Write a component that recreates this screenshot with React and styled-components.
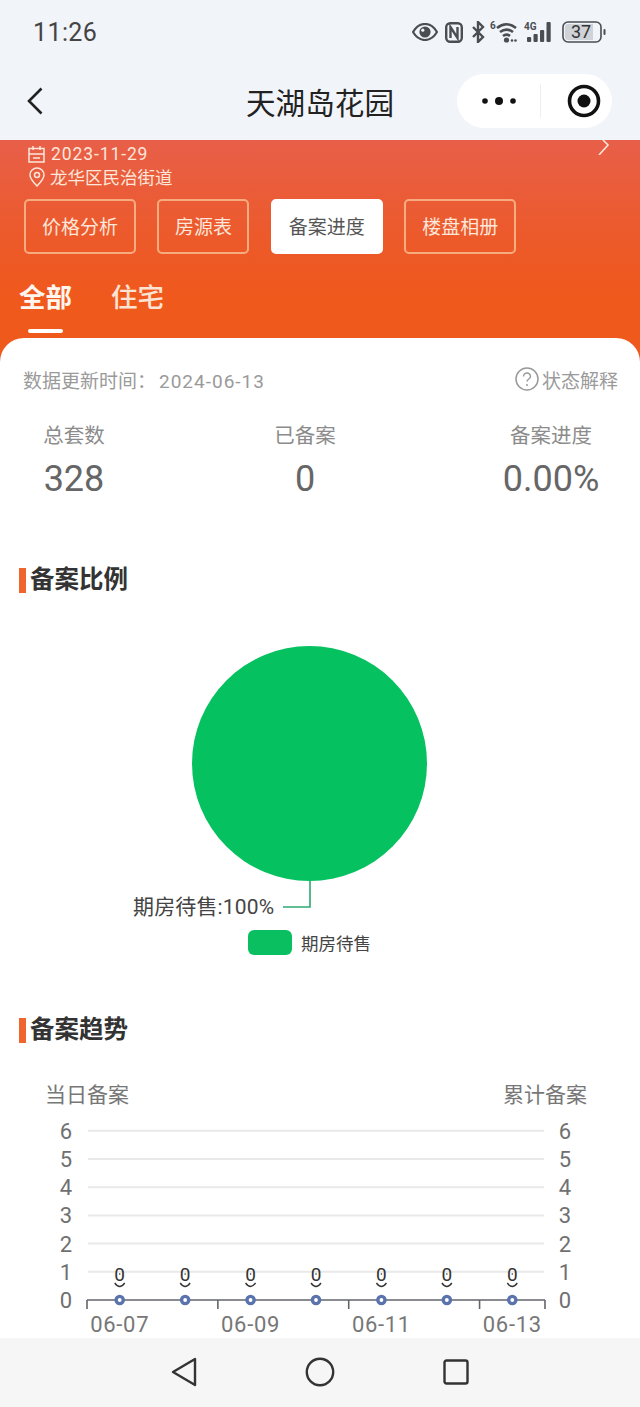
import React from 'react';
import styled, { createGlobalStyle } from 'styled-components';

const FONT = `Roboto, "Noto Sans CJK SC", sans-serif`;

const GlobalStyle = createGlobalStyle`
  html, body { margin: 0; padding: 0; background: #fff; }
  body { font-family: ${FONT}; }
  * { box-sizing: border-box; }
`;

const Screen = styled.div`
  width: 640px;
  height: 1407px;
  display: flex;
  flex-direction: column;
  overflow: hidden;
  background: #fff;
`;

const StatusBar = styled.div`
  height: 64px;
  flex: none;
  display: flex;
  align-items: center;
  justify-content: space-between;
  padding: 0 34px 0 33px;
  background: #f1f4f9;
`;

const Time = styled.span`
  font-size: 25px;
  color: #444;
  letter-spacing: 0.4px;
`;

const StatusIcons = styled.div`
  display: flex;
  align-items: center;
  color: #4a4d52;
`;

const StatusIcon = styled.svg`
  margin-left: ${(p) => p.$left || 0}px;
`;

const NavBar = styled.div`
  height: 76px;
  flex: none;
  display: flex;
  align-items: center;
  justify-content: space-between;
  padding: 0 28px 2px 27px;
  background: #f1f4f9;
  position: relative;
`;

const NavTitle = styled.h1`
  position: absolute;
  left: 0;
  right: 0;
  margin: 0;
  text-align: center;
  font-size: 29.6px;
  font-weight: 400;
  color: #222;
  pointer-events: none;
`;

const Capsule = styled.div`
  width: 155px;
  height: 54px;
  display: flex;
  align-items: center;
  border-radius: 27px;
  background: #fff;
`;

const CapsuleCell = styled.div`
  flex: ${(p) => (p.$wide ? '0 0 84px' : '1')};
  height: 34px;
  display: flex;
  align-items: center;
  justify-content: center;
  padding-left: ${(p) => (p.$wide ? 0 : 14)}px;
  border-right: ${(p) => (p.$wide ? '1px solid #eeeff1' : 'none')};
`;

const Hero = styled.div`
  height: 222px;
  flex: none;
  position: relative;
  padding: 2px 24px 0;
  color: #fde6da;
  background: linear-gradient(180deg, #e85f49 0%, #ec5a2c 42%, #f0591c 72%);
`;

const HeroArrow = styled.svg`
  position: absolute;
  top: 0;
  right: 30px;
`;

const MetaLine = styled.div`
  height: 23px;
  display: flex;
  align-items: center;
  gap: ${(p) => p.$gap || 5}px;
  padding-left: 4px;
  font-size: ${(p) => p.$size || 17.5}px;
  letter-spacing: ${(p) => p.$spacing || 0}px;
`;

const ButtonRow = styled.div`
  display: flex;
  gap: 21.4px;
  margin-top: 11px;
`;

const HeroButton = styled.div`
  width: ${(p) => p.$width}px;
  height: 55px;
  display: flex;
  align-items: center;
  justify-content: center;
  padding-bottom: 2px;
  border-radius: 5px;
  font-size: 19px;
  border: 2px solid ${(p) => (p.$active ? '#fff' : '#f6ac7e')};
  background: ${(p) => (p.$active ? '#fff' : 'transparent')};
  color: ${(p) => (p.$active ? '#555' : '#fde6da')};
`;

const TabRow = styled.div`
  display: flex;
  gap: 38px;
  margin: 26px 0 0 -5px;
`;

const Tab = styled.div`
  width: 54px;
  height: 36px;
  line-height: 36px;
  font-size: 26.5px;
  white-space: nowrap;
  font-weight: ${(p) => (p.$active ? 700 : 500)};
  color: ${(p) => (p.$active ? '#fff6f0' : '#fde3d3')};
`;

const TabMark = styled.div`
  width: 35px;
  height: 4px;
  margin: 13px 0 0 9px;
  border-radius: 2px;
  background: #fff;
`;

const Card = styled.div`
  flex: 1;
  min-height: 0;
  position: relative;
  margin-top: -24px;
  overflow: hidden;
  padding-top: 28px;
  border-radius: 24px 24px 0 0;
  background: #fff;
`;

const MetaRow = styled.div`
  height: 26px;
  display: flex;
  align-items: center;
  justify-content: space-between;
  padding: 0 22px 0 23px;
  font-size: 19px;
  color: #9a9a9a;
`;

const UpdateDate = styled.span`
  margin-left: 3px;
  letter-spacing: 1px;
`;

const Hint = styled.div`
  display: flex;
  align-items: center;
  gap: 3px;
`;

const StatRow = styled.div`
  display: flex;
  justify-content: space-between;
  padding: 0 42px;
  margin-top: 30px;
`;

const Stat = styled.div`
  width: ${(p) => p.$width}px;
  display: flex;
  flex-direction: column;
  align-items: center;
`;

const StatLabel = styled.div`
  height: 28px;
  line-height: 28px;
  font-size: 20.5px;
  white-space: nowrap;
  color: #8c8c8c;
`;

const StatValue = styled.div`
  height: 44px;
  line-height: 44px;
  margin-top: 7px;
  font-size: 36px;
  white-space: nowrap;
  color: #666;
`;

const SectionTitle = styled.h2`
  height: 26px;
  display: flex;
  align-items: center;
  gap: 4px;
  margin: ${(p) => p.$top}px 0 0 19px;
  padding-bottom: 4px;
  font-size: 24.5px;
  font-weight: 700;
  color: #333;
  &::before {
    content: '';
    width: 7px;
    height: 25px;
    background: #ef652d;
    transform: translateY(3px);
  }
`;

const ChartSvg = styled.svg`
  display: block;
  margin-top: ${(p) => p.$top || 0}px;
`;

const Legend = styled.div`
  display: flex;
  align-items: center;
  gap: 9px;
  margin: 10px 0 0 248px;
  font-size: 17.5px;
  color: #444;
`;

const LegendSwatch = styled.span`
  width: 44px;
  height: 25px;
  border-radius: 6px;
  background: #09bf60;
`;

const ChartHeader = styled.div`
  height: 28px;
  display: flex;
  align-items: center;
  justify-content: space-between;
  margin-top: 38px;
  padding: 0 53px 3px 45px;
  font-size: 21px;
  color: #777;
`;

const BottomBar = styled.div`
  height: 69px;
  flex: none;
  display: flex;
  align-items: center;
  justify-content: center;
  gap: 108px;
  padding-bottom: 1px;
  background: #f6f6f6;
`;

const Eye = () => (
  <StatusIcon width="26" height="18" viewBox="0 0 26 18">
    <path d="M1 9c3-5 7-8 12-8s9 3 12 8c-3 5-7 8-12 8S4 14 1 9z" fill="none" stroke="currentColor" strokeWidth="2.2" />
    <circle cx="13" cy="9" r="5.6" fill="currentColor" />
    <circle cx="10.8" cy="7.2" r="1.6" fill="#f1f4f9" />
  </StatusIcon>
);

const Nfc = () => (
  <StatusIcon $left={7} width="18" height="21" viewBox="0 0 18 21">
    <rect x="1.2" y="1.2" width="15.6" height="18.6" rx="4" fill="none" stroke="currentColor" strokeWidth="2.4" />
    <path d="M5.5 16V5l7 11V5" fill="none" stroke="currentColor" strokeWidth="2.4" />
  </StatusIcon>
);

const Bluetooth = () => (
  <StatusIcon $left={8} width="14" height="22" viewBox="0 0 14 22">
    <path d="M2 6l10 10-5 5V1l5 5L2 16" fill="none" stroke="currentColor" strokeWidth="2.4" />
  </StatusIcon>
);

const Wifi = () => (
  <StatusIcon $left={5} width="28" height="24" viewBox="0 0 28 24">
    <text x="0" y="9" fontSize="10" fontWeight="700" fill="currentColor">6</text>
    <path d="M7 8c6-5 13-5 19 0M10 12c4-3 9-3 13 0M13 16c2-1.6 5-1.6 7 0" fill="none" stroke="currentColor" strokeWidth="2.6" />
    <circle cx="16.5" cy="20" r="2.6" fill="currentColor" />
    <circle cx="22" cy="20.5" r="1.3" fill="currentColor" />
    <circle cx="25.5" cy="20.5" r="1.3" fill="currentColor" />
  </StatusIcon>
);

const Signal = () => (
  <StatusIcon $left={6} width="31" height="22" viewBox="0 0 31 22">
    <text x="0" y="9" fontSize="10" fontWeight="700" fill="currentColor">4G</text>
    <rect x="3" y="16" width="4.2" height="5" rx="1" fill="currentColor" />
    <rect x="9.5" y="13" width="4.2" height="8" rx="1" fill="currentColor" />
    <rect x="16" y="9" width="4.2" height="12" rx="1" fill="currentColor" />
    <rect x="22.5" y="1" width="4.2" height="20" rx="1" fill="currentColor" />
  </StatusIcon>
);

const Battery = () => (
  <StatusIcon $left={7} width="44" height="22" viewBox="0 0 44 22">
    <rect x="1" y="1" width="38" height="20" rx="5" fill="none" stroke="currentColor" strokeWidth="1.6" />
    <path d="M3 6a3 3 0 013-3h25v16H6a3 3 0 01-3-3z" fill="#cfd2d6" />
    <rect x="41.5" y="8" width="2" height="6" rx="1" fill="currentColor" />
    <text x="19" y="17" textAnchor="middle" fontSize="18" fill="#333">37</text>
  </StatusIcon>
);

const CHART_TOP = 1115;
const PLOT_LEFT = 87;
const PLOT_RIGHT = 545;
const STEP = (PLOT_RIGHT - PLOT_LEFT) / 7;
const rowY = (v) => 1300 - CHART_TOP - v * 28.2;
const days = ['06-07', '06-08', '06-09', '06-10', '06-11', '06-12', '06-13'];

const TrendChart = () => (
  <ChartSvg $top={7} width="640" height="223" viewBox="0 0 640 223">
    {[1, 2, 3, 4, 5, 6].map((v) => (
      <line key={v} x1={PLOT_LEFT + 1} x2={PLOT_RIGHT - 1} y1={rowY(v)} y2={rowY(v)} stroke="#e9e9e9" strokeWidth="2" />
    ))}
    {[0, 1, 2, 3, 4, 5, 6].map((v) => (
      <g key={v} fontSize="22" fill="#707070" textAnchor="middle">
        <text x="66" y={rowY(v) + 8}>{v}</text>
        <text x="565" y={rowY(v) + 8}>{v}</text>
      </g>
    ))}
    <line x1={PLOT_LEFT} x2={PLOT_RIGHT} y1={rowY(0)} y2={rowY(0)} stroke="#63656c" strokeWidth="1.6" />
    {[0, 2, 4, 6, 7].map((i) => (
      <line key={i} x1={PLOT_LEFT + i * STEP} x2={PLOT_LEFT + i * STEP} y1={rowY(0)} y2={rowY(0) + 9} stroke="#63656c" strokeWidth="1.6" />
    ))}
    {days.map((d, i) => {
      const x = PLOT_LEFT + (i + 0.5) * STEP;
      return (
        <g key={d}>
          <text x={x} y={rowY(0) - 19} fontSize="19" fill="#333" textAnchor="middle">0</text>
          <circle cx={x} cy={rowY(0) - 26} r="0.8" fill="#333" />
          <path d={`M${x - 5} ${rowY(0) - 17}q5 7 10 0`} fill="none" stroke="#333" strokeWidth="1.3" />
          <circle cx={x} cy={rowY(0)} r="3.6" fill="#fff" stroke="#5a73ac" strokeWidth="3.4" />
          {i % 2 === 0 && (
            <text x={x} y={rowY(0) + 32} fontSize="22" letterSpacing="0.7" fill="#777" textAnchor="middle">{d}</text>
          )}
        </g>
      );
    })}
  </ChartSvg>
);

export default function App() {
  return (
    <>
      <GlobalStyle />
      <Screen>
        <StatusBar>
          <Time>11:26</Time>
          <StatusIcons>
            <Eye />
            <Nfc />
            <Bluetooth />
            <Wifi />
            <Signal />
            <Battery />
          </StatusIcons>
        </StatusBar>

        <NavBar>
          <svg width="16" height="28" viewBox="0 0 16 28">
            <path d="M14.5 1.5L2 14l12.5 12.5" fill="none" stroke="#222" strokeWidth="2.6" />
          </svg>
          <NavTitle>天湖岛花园</NavTitle>
          <Capsule>
            <CapsuleCell $wide>
              <svg width="36" height="12" viewBox="0 0 36 12">
                <circle cx="4" cy="6" r="2.8" fill="#111" />
                <circle cx="18" cy="6" r="4" fill="#111" />
                <circle cx="32" cy="6" r="2.8" fill="#111" />
              </svg>
            </CapsuleCell>
            <CapsuleCell>
              <svg width="34" height="34" viewBox="0 0 34 34">
                <circle cx="17" cy="17" r="14.5" fill="none" stroke="#111" strokeWidth="3.6" />
                <circle cx="17" cy="17" r="6.5" fill="#111" />
              </svg>
            </CapsuleCell>
          </Capsule>
        </NavBar>

        <Hero>
          <HeroArrow width="14" height="15" viewBox="0 0 14 15">
            <path d="M7 0l5 5-9 10" fill="none" stroke="#fde6da" strokeWidth="1.6" />
          </HeroArrow>
          <MetaLine $gap={6} $spacing={0.9}>
            <svg width="17" height="18" viewBox="0 0 17 18">
              <path d="M1 3.5h15v13.5H1zM1 9h15M5 1v4M12 1v4M5 13h7" fill="none" stroke="#fde6da" strokeWidth="1.5" />
            </svg>
            2023-11-29
          </MetaLine>
          <MetaLine $gap={4}>
            <svg width="18" height="20" viewBox="0 0 18 20">
              <path d="M9 19C5 15 2 11.5 2 8a7 7 0 0114 0c0 3.5-3 7-7 11z" fill="none" stroke="#fde6da" strokeWidth="1.5" />
              <circle cx="9" cy="8" r="2.5" fill="none" stroke="#fde6da" strokeWidth="1.5" />
            </svg>
            龙华区民治街道
          </MetaLine>
          <ButtonRow>
            <HeroButton $width={112}>价格分析</HeroButton>
            <HeroButton $width={92}>房源表</HeroButton>
            <HeroButton $width={112} $active>备案进度</HeroButton>
            <HeroButton $width={112}>楼盘相册</HeroButton>
          </ButtonRow>
          <TabRow>
            <div>
              <Tab $active>全部</Tab>
              <TabMark />
            </div>
            <Tab>住宅</Tab>
          </TabRow>
        </Hero>

        <Card>
          <MetaRow>
            <span>数据更新时间：<UpdateDate>2024-06-13</UpdateDate></span>
            <Hint>
              <svg width="24" height="24" viewBox="0 0 24 24">
                <circle cx="12" cy="12" r="11" fill="none" stroke="#9a9a9a" strokeWidth="1.5" />
                <path d="M8.5 9.5a3.5 3.5 0 117 0c0 2.5-3.5 2.5-3.5 5" fill="none" stroke="#9a9a9a" strokeWidth="1.5" />
                <circle cx="12" cy="18" r="1" fill="#9a9a9a" />
              </svg>
              状态解释
            </Hint>
          </MetaRow>

          <StatRow>
            <Stat $width={64}>
              <StatLabel>总套数</StatLabel>
              <StatValue>328</StatValue>
            </Stat>
            <Stat $width={60}>
              <StatLabel>已备案</StatLabel>
              <StatValue>0</StatValue>
            </Stat>
            <Stat $width={94}>
              <StatLabel>备案进度</StatLabel>
              <StatValue>0.00%</StatValue>
            </Stat>
          </StatRow>

          <SectionTitle $top={65}>备案比例</SectionTitle>
          <ChartSvg width="640" height="328" viewBox="0 0 640 328">
            <circle cx="309.5" cy="171.5" r="117.5" fill="#05c160" />
            <path d="M310 289v26h-27" fill="none" stroke="#2fa673" strokeWidth="1.6" />
            <text x="133" y="322" fontSize="21" letterSpacing="0.15" fill="#444">期房待售:100%</text>
          </ChartSvg>
          <Legend>
            <LegendSwatch />
            期房待售
          </Legend>

          <SectionTitle $top={61}>备案趋势</SectionTitle>
          <ChartHeader>
            <span>当日备案</span>
            <span>累计备案</span>
          </ChartHeader>
          <TrendChart />
        </Card>

        <BottomBar>
          <svg width="26" height="30" viewBox="0 0 26 30">
            <path d="M24 2v26L2 15z" fill="none" stroke="#333" strokeWidth="2.4" strokeLinejoin="round" />
          </svg>
          <svg width="30" height="30" viewBox="0 0 30 30">
            <circle cx="15" cy="15" r="13.2" fill="none" stroke="#333" strokeWidth="2.4" />
          </svg>
          <svg width="26" height="26" viewBox="0 0 26 26">
            <rect x="1.5" y="1.5" width="23" height="23" rx="2" fill="none" stroke="#333" strokeWidth="2.4" />
          </svg>
        </BottomBar>
      </Screen>
    </>
  );
}
